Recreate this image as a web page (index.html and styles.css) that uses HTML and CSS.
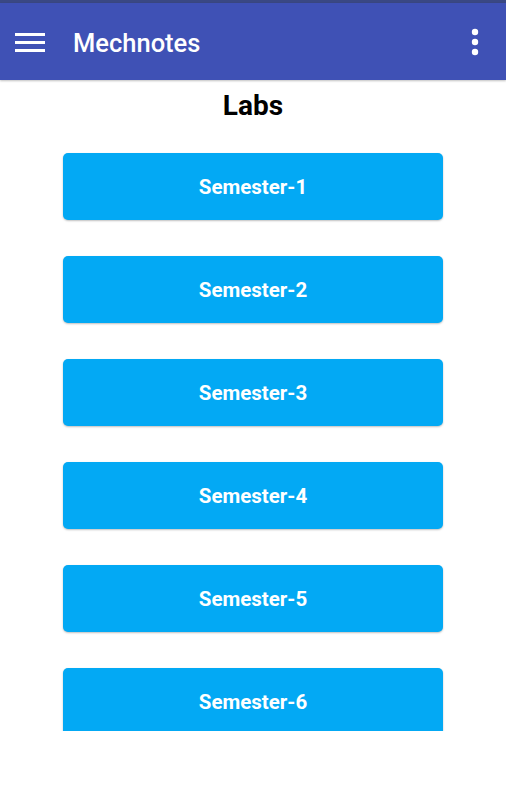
FILE: index.html
```html
<!DOCTYPE html>
<html>
<head>
<meta charset="utf-8">
<link rel="stylesheet" href="styles.css">
</head>
<body>
<div class="status"></div>
<header class="appbar">
  <svg class="menu" width="32" height="24" viewBox="0 0 32 24">
    <rect x="1" y="3" width="30" height="3" fill="#fff"/>
    <rect x="1" y="11" width="30" height="3" fill="#fff"/>
    <rect x="1" y="19" width="30" height="3" fill="#fff"/>
  </svg>
  <h1 class="title">Mechnotes</h1>
  <svg class="more" width="10" height="30" viewBox="0 0 10 30">
    <circle cx="5" cy="5" r="3.2" fill="#fff"/>
    <circle cx="5" cy="15" r="3.2" fill="#fff"/>
    <circle cx="5" cy="25" r="3.2" fill="#fff"/>
  </svg>
</header>
<main class="content">
  <h2 class="heading">Labs</h2>
  <div class="list">
    <button class="sem">Semester-1</button>
    <button class="sem">Semester-2</button>
    <button class="sem">Semester-3</button>
    <button class="sem">Semester-4</button>
    <button class="sem">Semester-5</button>
    <button class="sem">Semester-6</button>
  </div>
</main>
</body>
</html>
```
FILE: styles.css
```css
html, body {
  margin: 0;
  padding: 0;
  background: #fff;
  font-family: Roboto, "Liberation Sans", sans-serif;
}
.status {
  height: 3px;
  background: #3a4883;
}
.appbar {
  height: 77px;
  background: #3f51b5;
  display: flex;
  align-items: center;
  box-sizing: border-box;
  padding: 0 26px 0 14px;
  box-shadow: 0 1px 2px rgba(0,0,0,0.25);
  position: relative;
  z-index: 1;
}
.menu {
  display: block;
  margin-top: 1px;
}
.title {
  margin: 2px 0 0 27px;
  color: #fff;
  font-size: 25.5px;
  font-weight: 500;
  flex: 1;
}
.more {
  display: block;
  margin-top: 1px;
}
.content {
  height: 651px;
  overflow: hidden;
}
.heading {
  margin: 9px 0 0;
  text-align: center;
  font-size: 28px;
  font-weight: 700;
  color: #000;
  line-height: 34px;
}
.list {
  display: flex;
  flex-direction: column;
  align-items: center;
  gap: 36px;
  padding-top: 30px;
}
.sem {
  width: 380px;
  height: 67px;
  flex: none;
  border: none;
  border-radius: 5px;
  background: #03a9f4;
  color: #fff;
  font-family: Roboto, "Liberation Sans", sans-serif;
  font-size: 20.5px;
  font-weight: 700;
  box-shadow: 0 1px 2px rgba(0,0,0,0.25);
  padding: 0;
}
```
